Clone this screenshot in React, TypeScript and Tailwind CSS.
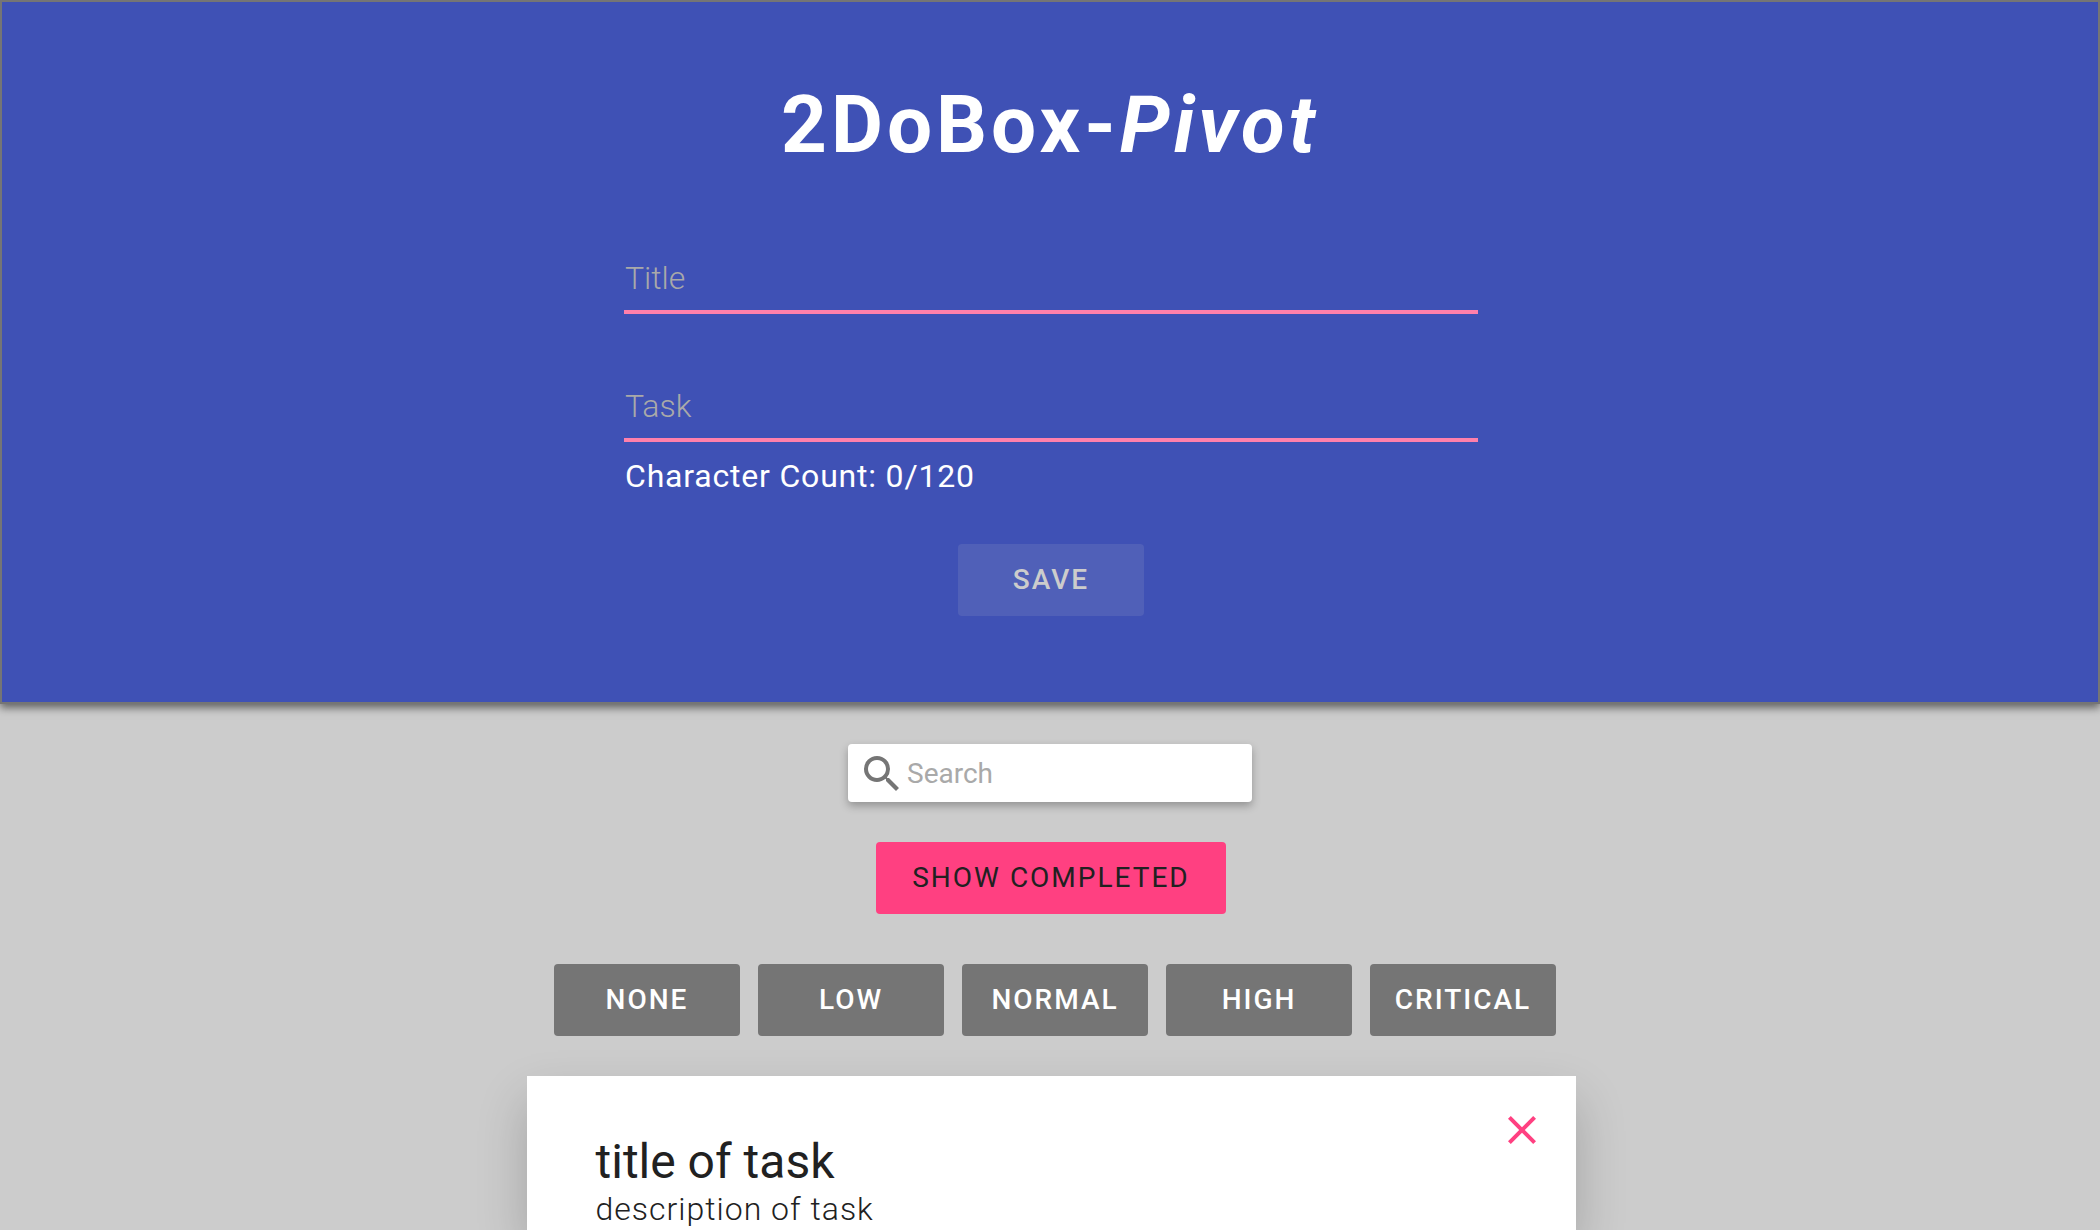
import { useState } from "react";
import { MdClose, MdSearch } from "react-icons/md";

const LIMIT = 120;
const IMPORTANCES = ["None", "Low", "Normal", "High", "Critical"];

const fieldClass =
  "block h-[68px] w-full border-b-4 border-[#ff80ab] bg-transparent px-px text-[32px] font-light text-white outline-none placeholder:text-[#a9a9a9]";

function TaskCard({ title, body }: { title: string; body: string }) {
  return (
    <article className="flex w-1/2 items-start justify-between bg-white pt-[30px] pr-[30px] pl-[69px] text-[#212121] shadow-[0_24px_48px_rgba(0,0,0,0.2)]">
      <div className="pt-7">
        <h2 className="text-[48px] leading-[56px]">{title}</h2>
        <p className="text-[32px] leading-[38px] font-light tracking-[1px]">{body}</p>
      </div>
      <button type="button" aria-label="Delete task" className="text-[#ff4081]">
        <MdClose className="size-12" />
      </button>
    </article>
  );
}

export default function App() {
  const [title, setTitle] = useState("");
  const [task, setTask] = useState("");
  const [query, setQuery] = useState("");

  return (
    <div className="flex min-h-screen flex-col bg-[#cccccc] font-[Roboto,sans-serif]">
      <header className="flex flex-col items-center border-2 border-[#757575] bg-[#3f51b5] px-4 pt-[75px] pb-[86px] text-white shadow-[0_4px_8px_rgba(0,0,0,0.5)]">
        <h1 className="text-[80px] leading-24 font-bold tracking-wider">
          2DoBox-<em>Pivot</em>
        </h1>
        <form className="mt-[73px] flex w-full max-w-[856px] flex-col pl-0.5" onSubmit={(e) => e.preventDefault()}>
          <input
            className={fieldClass}
            aria-label="Title"
            placeholder="Title"
            value={title}
            onChange={(e) => setTitle(e.target.value)}
          />
          <input
            className={`mt-15 ${fieldClass}`}
            aria-label="Task"
            placeholder="Task"
            maxLength={LIMIT}
            value={task}
            onChange={(e) => setTask(e.target.value)}
          />
          <p className="mt-[14px] px-px text-[32px] leading-10 tracking-wide">
            Character Count: {task.length}/{LIMIT}
          </p>
          <button
            type="submit"
            disabled={!title || !task}
            className="mt-12 h-18 w-[186px] self-center rounded bg-[#5060b8] text-[28px] font-medium tracking-[2px] text-[#cccccc] uppercase"
          >
            Save
          </button>
        </form>
      </header>

      <main className="flex grow flex-col items-center pt-10">
        <label className="flex h-[58px] w-[404px] items-center rounded bg-white pt-0.5 pl-2.5 shadow-[0_4px_8px_rgba(0,0,0,0.28)]">
          <MdSearch className="size-12 shrink-0 text-[#757575]" />
          <input
            type="text"
            aria-label="Search"
            placeholder="Search"
            value={query}
            onChange={(e) => setQuery(e.target.value)}
            className="min-w-0 grow bg-transparent pl-px text-[28px] text-[#212121] outline-none placeholder:text-[#a9a9a9]"
          />
        </label>
        <button
          type="button"
          className="mt-10 ml-0.5 h-18 w-[350px] rounded bg-[#ff4081] text-[28px] tracking-[2px] text-[#212121] uppercase"
        >
          Show completed
        </button>
        <div className="mt-[50px] flex gap-[18px] pl-2.5">
          {IMPORTANCES.map((name) => (
            <button
              key={name}
              type="button"
              className="h-18 w-[186px] rounded bg-[#757575] text-[28px] font-medium tracking-[2px] text-white uppercase"
            >
              {name}
            </button>
          ))}
        </div>
        <div className="mt-10 flex w-full grow justify-center pl-0.5">
          <TaskCard title="title of task" body="description of task" />
        </div>
      </main>
    </div>
  );
}
